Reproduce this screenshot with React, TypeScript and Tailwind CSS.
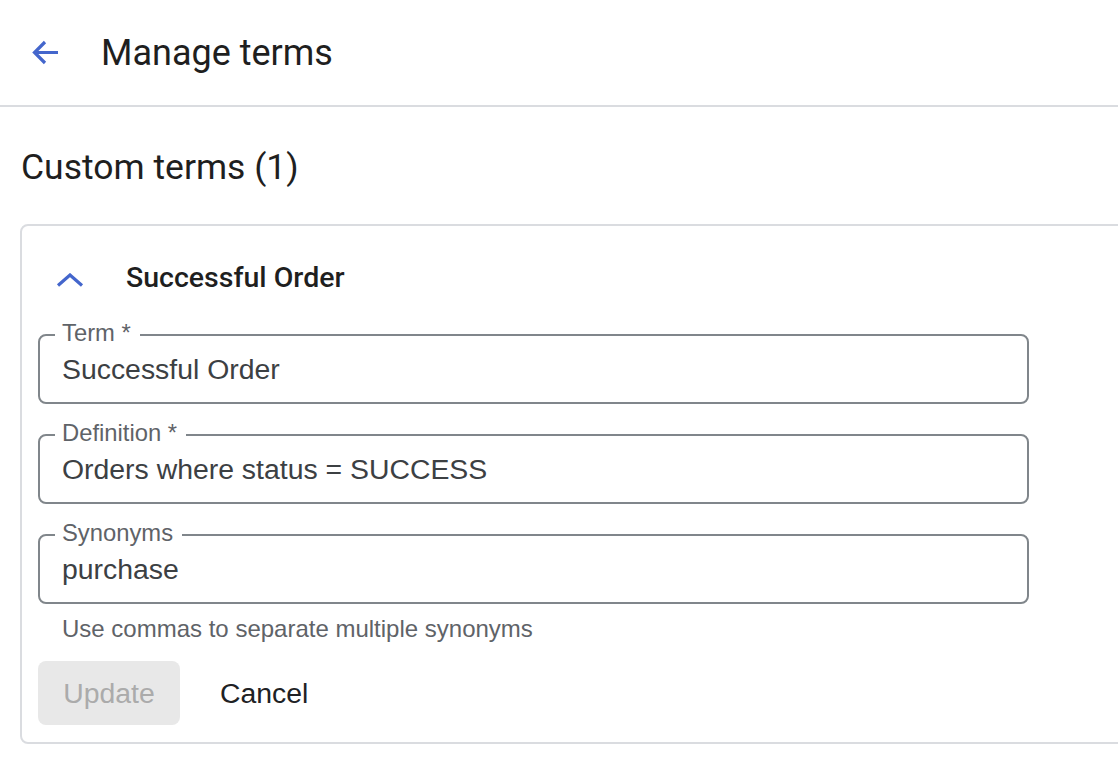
import React from "react";

function Field({ label, value }: { label: string; value: string }) {
  return (
    <div className="relative h-[70px] w-[991px] rounded-[8px] border-2 border-[#80868b] flex items-center pl-[22px]">
      <span className="absolute left-[15px] top-[-16px] bg-white pl-[7px] pr-[9px] text-[23.8px] leading-[26px] text-[#5f6368] font-['Liberation_Sans',Arial,sans-serif]">
        {label}
      </span>
      <span className="text-[28.4px] leading-[32px] text-[#3c4043] font-['Liberation_Sans',Arial,sans-serif]">
        {value}
      </span>
    </div>
  );
}

export default function App() {
  return (
    <div className="w-[1118px] h-[759px] bg-white overflow-hidden font-['Roboto',sans-serif]">
      <header className="h-[107px] border-b-2 border-[#dadce0] flex items-center pl-[31px]">
        <svg width="28" height="25" viewBox="0 0 28 25" fill="none" className="shrink-0">
          <path d="M27 12.5H4M14 2L3.5 12.5 14 23" stroke="#4466cc" strokeWidth="3.2" />
        </svg>
        <h1 className="ml-[42px] text-[36px] leading-[40px] text-[#1f1f1f] font-normal">Manage terms</h1>
      </header>

      <h2 className="ml-[21px] mt-[42px] text-[35.5px] leading-[36px] text-[#1f1f1f] font-normal">Custom terms (1)</h2>

      <div className="ml-[20px] mt-[39px] w-[1120px] h-[520px] rounded-[8px] border-2 border-[#dadce0]">
        <div className="mt-[32px] h-[40px] flex items-center">
          <svg width="28" height="14" viewBox="0 0 28 14" fill="none" className="ml-[34px] shrink-0 mt-[4px]">
            <path d="M2 12.5L14 2l12 10.5" stroke="#4466cc" strokeWidth="3.2" />
          </svg>
          <span className="ml-[42px] text-[28.5px] leading-[32px] font-medium text-[#1f1f1f]">
            Successful Order
          </span>
        </div>

        <div className="pl-[16px] mt-[36px] flex flex-col">
          <div className="flex flex-col gap-[30px]">
            <Field label="Term *" value="Successful Order" />
            <Field label="Definition *" value="Orders where status = SUCCESS" />
            <Field label="Synonyms" value="purchase" />
          </div>
          <p className="mt-[11px] pl-[24px] text-[24px] leading-[28px] text-[#5f6368] font-['Liberation_Sans',Arial,sans-serif]">
            Use commas to separate multiple synonyms
          </p>
          <div className="mt-[18px] flex items-center">
            <button className="w-[142px] h-[64px] rounded-[8px] bg-[#e8e8e8] text-[28.4px] text-[#ababab] font-['Liberation_Sans',Arial,sans-serif]">
              Update
            </button>
            <button className="ml-[40px] text-[28.4px] text-[#202124] font-['Liberation_Sans',Arial,sans-serif]">
              Cancel
            </button>
          </div>
        </div>
      </div>
    </div>
  );
}
